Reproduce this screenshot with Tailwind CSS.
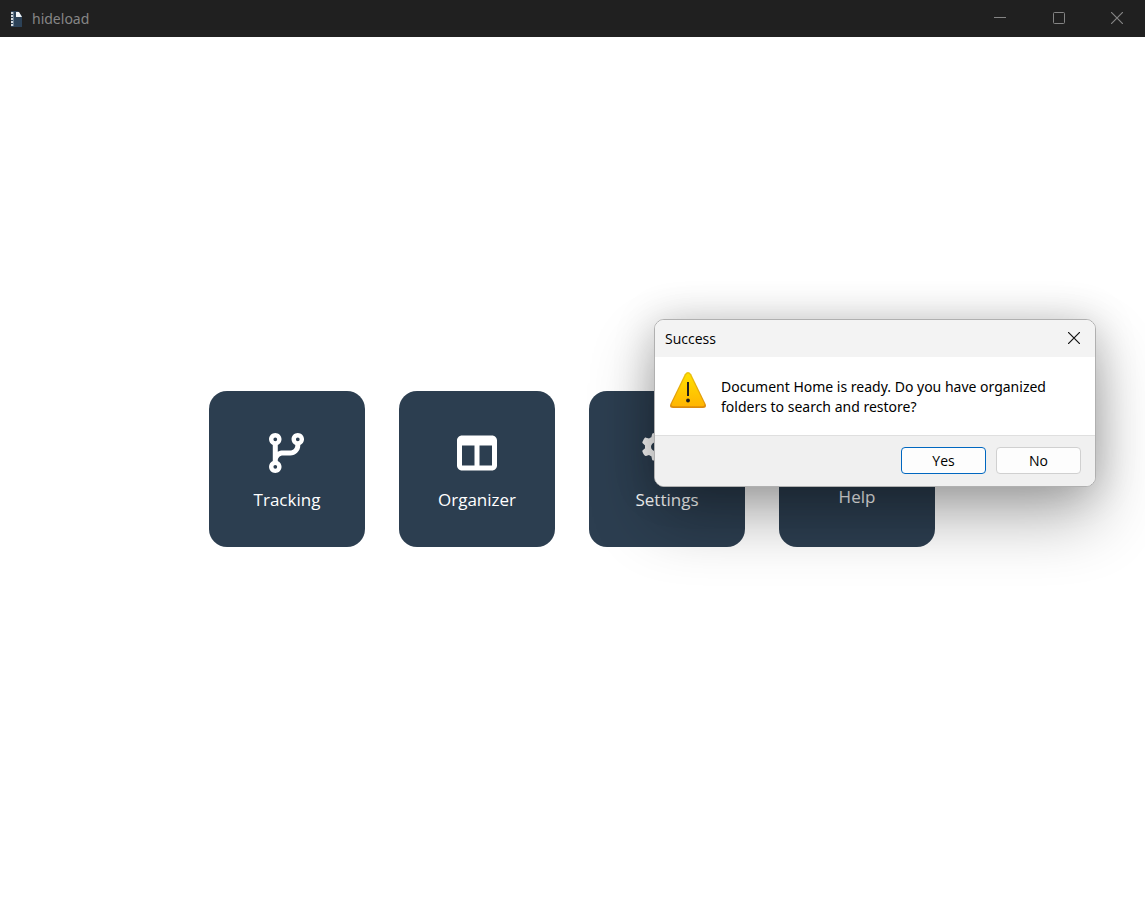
<!DOCTYPE html>
<html lang="en">
<head>
<meta charset="utf-8">
<meta name="viewport" content="width=device-width, initial-scale=1">
<title>hideload</title>
<script src="https://cdn.jsdelivr.net/npm/@tailwindcss/browser@4"></script>
</head>
<body class="relative flex h-screen flex-col overflow-hidden bg-white font-['Open_Sans',sans-serif]">
  <header class="flex h-[37px] shrink-0 items-center justify-between bg-[#202020] pl-2">
    <div class="flex items-center gap-2">
      <svg class="size-4" viewBox="0 0 16 16" aria-hidden="true">
        <path d="M3 0h7l4 5v11H3z" fill="#2c4258"/>
        <path d="M8 1h3l3 5H8z" fill="#f1f3f5"/>
        <path d="M3 1h2v2H3zM3 4h2v2H3zM3 7h2v2H3zM3 10h2v2H3zM3 13h2v2H3z" fill="#d5dbe0"/>
        <path d="M5 1h1v14H5z" fill="#6d8092"/>
      </svg>
      <span class="font-['Noto_Sans',sans-serif] text-[14px] leading-5 text-[#868686]">hideload</span>
    </div>
    <div class="flex h-full pb-px text-[#848484]">
      <button type="button" aria-label="Minimize" class="flex h-full w-[58px] items-center justify-center">
        <svg class="size-3" viewBox="0 0 12 12" fill="none" stroke="currentColor"><path d="M0 5.5h12"/></svg>
      </button>
      <button type="button" aria-label="Maximize" class="flex h-full w-[60px] items-center justify-center">
        <svg class="size-3" viewBox="0 0 12 12" fill="none" stroke="currentColor"><rect x=".5" y=".5" width="11" height="11" rx="1"/></svg>
      </button>
      <button type="button" aria-label="Close" class="flex h-full w-[56px] items-center justify-center">
        <svg class="size-3" viewBox="0 0 12 12" fill="none" stroke="currentColor" stroke-width="1.200"><path d="M0 0l12 12M12 0L0 12"/></svg>
      </button>
    </div>
  </header>

  <main class="flex flex-1 items-center justify-center gap-[34px] pt-[3px] pr-px text-[17px] leading-6 text-white">
    <button type="button" class="flex size-[156px] flex-col items-center justify-center gap-[15px] rounded-[18px] bg-[#2c3e50] pt-[7px]">
      <svg class="h-10 w-9" viewBox="0 0 460 512" fill="currentColor" aria-hidden="true"><path d="M80 104a24 24 0 1 0 0-48 24 24 0 1 0 0 48zm80-24c0 32.8-19.7 61-48 73.3v87.8c18.8-10.9 40.7-17.1 64-17.1h96c35.3 0 64-28.7 64-64v-6.7C307.7 141 288 112.8 288 80c0-44.2 35.8-80 80-80s80 35.8 80 80c0 32.8-19.7 61-48 73.3V160c0 70.7-57.3 128-128 128H176c-35.3 0-64 28.7-64 64v6.7c28.3 12.3 48 40.5 48 73.3c0 44.2-35.8 80-80 80s-80-35.8-80-80c0-32.8 19.7-61 48-73.3V352 153.3C19.7 141 0 112.8 0 80C0 35.8 35.8 0 80 0s80 35.8 80 80zm232 0a24 24 0 1 0 -48 0 24 24 0 1 0 48 0zM80 456a24 24 0 1 0 0-48 24 24 0 1 0 0 48z"/></svg>
      <span>Tracking</span>
    </button>
    <button type="button" class="flex size-[156px] flex-col items-center justify-center gap-[15px] rounded-[18px] bg-[#2c3e50] pt-[7px]">
      <svg class="size-10" viewBox="0 0 512 512" fill="currentColor" aria-hidden="true"><path d="M0 96C0 60.7 28.7 32 64 32H448c35.3 0 64 28.7 64 64V416c0 35.3-28.7 64-64 64H64c-35.3 0-64-28.7-64-64V96zm64 64V416H224V160H64zm384 0H288V416H448V160z"/></svg>
      <span>Organizer</span>
    </button>
    <button type="button" class="flex size-[156px] flex-col items-center justify-center gap-[15px] rounded-[18px] bg-[#2c3e50] pt-[7px]">
      <svg class="h-10 w-[50px]" viewBox="0 0 640 512" fill="currentColor" aria-hidden="true">
        <defs><path id="gear" d="M495.9 166.6c3.2 8.7 .5 18.4-6.4 24.6l-43.3 39.4c1.1 8.3 1.7 16.8 1.7 25.4s-.6 17.1-1.7 25.4l43.3 39.4c6.9 6.2 9.6 15.9 6.4 24.6c-4.4 11.9-9.7 23.3-15.8 34.3l-4.7 8.1c-6.6 11-14 21.4-22.1 31.2c-5.9 7.2-15.7 9.6-24.5 6.8l-55.7-17.7c-13.4 10.3-28.2 18.9-44 25.4l-12.5 57.1c-2 9.1-9 16.3-18.2 17.8c-13.8 2.3-28 3.5-42.5 3.5s-28.7-1.2-42.5-3.5c-9.2-1.5-16.2-8.7-18.2-17.8l-12.5-57.1c-15.8-6.5-30.6-15.1-44-25.4L83.1 425.9c-8.8 2.8-18.6 .3-24.5-6.8c-8.1-9.8-15.5-20.2-22.1-31.2l-4.7-8.1c-6.1-11-11.4-22.4-15.8-34.3c-3.2-8.7-.5-18.4 6.4-24.6l43.3-39.4C64.6 273.1 64 264.6 64 256s.6-17.1 1.7-25.4L22.4 191.2c-6.9-6.2-9.6-15.9-6.4-24.6c4.4-11.9 9.7-23.3 15.8-34.3l4.7-8.1c6.6-11 14-21.4 22.1-31.2c5.9-7.2 15.7-9.6 24.5-6.8l55.7 17.7c13.4-10.3 28.2-18.9 44-25.4l12.5-57.1c2-9.1 9-16.3 18.2-17.8C227.3 1.2 241.5 0 256 0s28.7 1.2 42.5 3.5c9.2 1.5 16.2 8.7 18.2 17.8l12.5 57.1c15.8 6.5 30.6 15.1 44 25.4l55.7-17.7c8.8-2.8 18.6-.3 24.5 6.8c8.1 9.8 15.5 20.2 22.1 31.2l4.7 8.1c6.1 11 11.4 22.4 15.8 34.3zM256 336a80 80 0 1 0 0-160 80 80 0 1 0 0 160z"/></defs>
        <use href="#gear" transform="translate(-6 0) scale(.69)"/>
        <use href="#gear" transform="translate(462 336) rotate(30) scale(.67) translate(-256 -256)"/>
      </svg>
      <span>Settings</span>
    </button>
    <button type="button" class="flex size-[156px] flex-col items-center justify-center gap-[15px] rounded-[18px] bg-[#2c3e50] pt-[7px]">
      <svg class="size-[34px]" viewBox="0 0 34 34" fill="none" stroke="currentColor" stroke-width="3" stroke-linecap="round" aria-hidden="true"><circle cx="17" cy="17" r="15"/><path d="M12 13c0-7 10-6 10-.5 0 4-5 3.500-5 7.500M17 25v.2"/></svg>
      <span>Help</span>
    </button>
  </main>

  <section role="dialog" aria-labelledby="dialog-title" aria-describedby="dialog-text" class="absolute top-[319px] right-[49px] flex w-[442px] flex-col rounded-[10px] border border-[#b0b0b0] bg-white text-[14px] text-black shadow-[0_32px_64px_rgba(0,0,0,0.3),0_2px_42px_rgba(0,0,0,0.2)]">
    <div class="flex h-[37px] items-center justify-between rounded-t-[9px] bg-[#f3f3f3] pl-[10px]">
      <h1 id="dialog-title" class="leading-5">Success</h1>
      <button type="button" aria-label="Close dialog" class="flex h-full w-[42px] items-center justify-center pb-px">
        <svg class="size-3" viewBox="0 0 12 12" fill="none" stroke="#111" stroke-width="1.200"><path d="M0 0l12 12M12 0L0 12"/></svg>
      </button>
    </div>
    <div class="flex h-[78px] items-start gap-[14px] pt-[14px] pl-[14px]">
      <svg class="size-[38px] shrink-0" viewBox="0 0 38 38" aria-hidden="true">
        <defs>
          <linearGradient id="fill" x1="0" y1="0" x2="0" y2="1"><stop offset="0" stop-color="#ffe100"/><stop offset="1" stop-color="#ffb502"/></linearGradient>
          <linearGradient id="edge" x1="0" y1="0" x2="0" y2="1"><stop offset="0" stop-color="#ecc40c"/><stop offset="1" stop-color="#dc8a0c"/></linearGradient>
        </defs>
        <path d="M15.800 3.200Q19-1.200 22.200 3.200L36.600 33Q38 37 34 37H4Q0 37 1.400 33z" fill="url(#edge)"/>
        <path d="M17 4Q19 .9 21 4L35.200 32.500Q36.200 35.200 33.500 35.200H4.500Q1.800 35.200 2.800 32.500z" fill="url(#fill)"/>
        <path d="M18 11h2v14h-2z" fill="#1d1d1d"/>
        <circle cx="19" cy="29.500" r="1.900" fill="#1d1d1d"/>
      </svg>
      <p id="dialog-text" class="w-[344px] pt-[6px] font-['Noto_Sans',sans-serif] leading-5">Document Home is ready. Do you have organized folders to search and restore?</p>
    </div>
    <div class="flex h-[51px] items-center justify-end gap-[10px] rounded-b-[9px] border-t border-[#dfdfdf] bg-[#f0f0f0] pr-[14px] pb-px">
      <button type="button" class="h-[27px] w-[85px] rounded-[4px] border border-[#0067c0] bg-[#fdfdfd] leading-5">Yes</button>
      <button type="button" class="h-[27px] w-[85px] rounded-[4px] border border-[#d0d0d0] bg-[#fdfdfd] leading-5">No</button>
    </div>
  </section>
</body>
</html>
